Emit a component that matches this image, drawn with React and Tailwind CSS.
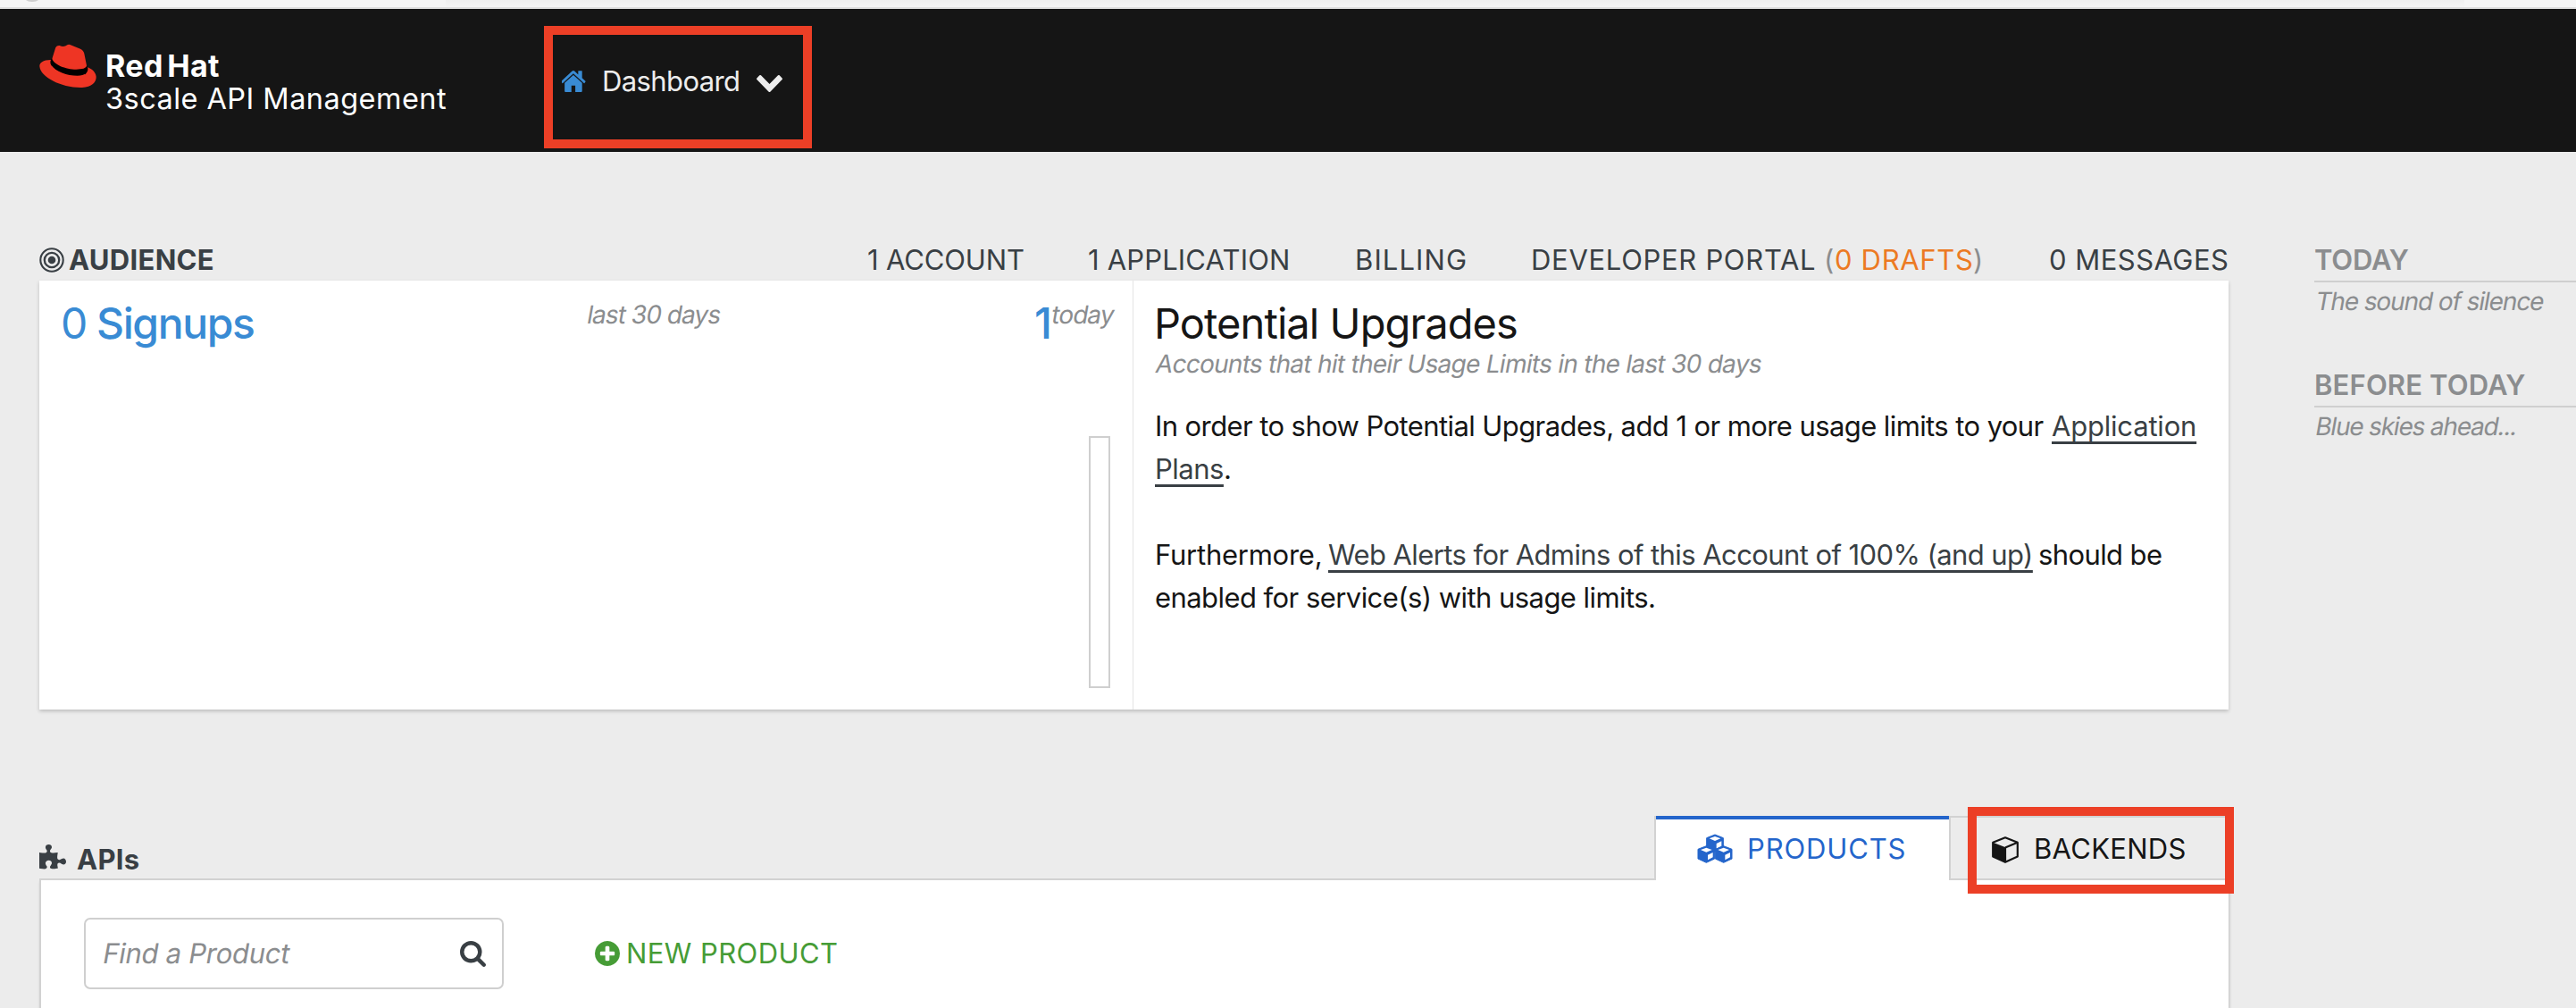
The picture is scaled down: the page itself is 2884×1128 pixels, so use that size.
import React from "react";

const GLYPHS = {
  home: {
    box: "71 248 1650 1288",
    d: "M1408 992v480q0 26-19 45t-45 19h-384v-384h-256v384h-384q-26 0-45-19t-19-45v-480q0-1 .5-3t.5-3l575-474 575 474q1 2 1 6zm223-69l-62 74q-8 9-21 11h-3q-13 0-21-7l-692-577-692 577q-12 8-24 7-13-2-21-11l-62-74q-8-10-7-23.5t11-21.5l719-599q32-26 76-26t76 26l244 204v-195q0-14 9-23t23-9h192q14 0 23 9t9 23v408l219 182q10 8 11 21.5t-7 23.5z",
  },
  chevron: {
    box: "90 533 1612 1035",
    d: "M1683 808l-742 741q-19 19-45 19t-45-19l-742-741q-19-19-19-45.5t19-45.5l166-165q19-19 45-19t45 19l531 531 531-531q19-19 45-19t45 19l166 165q19 19 19 45.5t-19 45.5z",
  },
  puzzle: {
    box: "64 0 1664 1664",
    d: "M1728 1098q0 81-44.5 135t-123.5 54q-41 0-77.5-17.5t-59-38-56.5-38-71-17.5q-110 0-110 124 0 39 16 115t15 115v5q-22 0-33 1-34 3-97.5 11.5t-115.5 13.5-98 5q-61 0-103-26.5t-42-83.5q0-37 17.5-71t38-56.5 38-59 17.5-77.5q0-79-54-123.5t-135-44.5q-84 0-143 45.5t-59 127.5q0 43 15 83t33.5 64.5 33.5 53 15 50.5q0 45-46 89-37 35-117 35-95 0-245-24-9-2-27.5-4t-27.5-4l-13-2q-1 0-3-1-2 0-2-1v-1024q2 1 17.5 3.5t34 5 21.5 3.5q150 24 245 24 80 0 117-35 46-44 46-89 0-22-15-50.5t-33.5-53-33.5-64.5-15-83q0-82 59-127.5t144-45.5q80 0 134 44.5t54 123.5q0 41-17.5 77.5t-38 59-38 56.5-17.5 71q0 57 42 83.5t103 26.5q64 0 180-15t163-17v2q-1 2-3.5 17.5t-5 34-3.5 21.5q-24 150-24 245 0 80 35 117 44 46 89 46 22 0 50.5-15t53-33.5 64.5-33.5 83-15q82 0 127.5 59t45.5 143z",
  },
  cube: {
    box: "128 0 1664 1792",
    d: "M896 1629l640-349v-636l-640 233v752zm-64-865l698-254-698-254-698 254zm832-252v768q0 35-18 65t-49 47l-704 384q-28 16-61 16t-61-16l-704-384q-31-17-49-47t-18-65v-768q0-40 23-73t61-50l704-256q22-8 44-8t44 8l704 256q38 17 61 50t23 73z",
  },
  search: {
    box: "64 128 1664 1664",
    d: "M1216 832q0-185-131.5-316.5t-316.5-131.5-316.5 131.5-131.5 316.5 131.5 316.5 316.5 131.5 316.5-131.5 131.5-316.5zm512 832q0 52-38 90t-90 38q-54 0-90-38l-343-342q-179 124-399 124-143 0-273.5-55.5t-225-150-150-225-55.5-273.5 55.5-273.5 150-225 225-150 273.5-55.5 273.5 55.5 225 150 150 225 55.5 273.5q0 220-124 399l343 343q37 37 37 90z",
  },
  plus: {
    box: "128 128 1536 1536",
    d: "M1344 960v-128q0-26-19-45t-45-19h-256v-256q0-26-19-45t-45-19h-128q-26 0-45 19t-19 45v256h-256q-26 0-45 19t-19 45v128q0 26 19 45t45 19h256v256q0 26 19 45t45 19h128q26 0 45-19t19-45v-256h256q26 0 45-19t19-45zm320-64q0 209-103 385.5t-279.5 279.5-385.5 103-385.5-103-279.5-279.5-103-385.5 103-385.5 279.5-279.5 385.5-103 385.5 103 279.5 279.5 103 385.5z",
  },
};

function Icon({ name, className }) {
  return (
    <svg viewBox={GLYPHS[name].box} preserveAspectRatio="none" fill="currentColor" className={"shrink-0 " + className}>
      <path d={GLYPHS[name].d} />
    </svg>
  );
}

// An outlined isometric box with a filled left face.
function Cube({ className }) {
  return (
    <svg viewBox="0 0 30 30" className={"shrink-0 " + className}>
      <path fill="none" stroke="currentColor" strokeWidth="2.2" strokeLinejoin="round" d="M15 1.3L28.8 6.7V22.4L15 28.8L1.2 22.4V6.7Z" />
      <path fill="none" stroke="currentColor" strokeWidth="2.2" d="M28.8 6.7L15 12.5" />
      <path fill="currentColor" d="M1.2 6.7L16.1 12.5V28.6L15 28.8L1.2 22.4Z" />
    </svg>
  );
}

function Fedora() {
  return (
    <svg viewBox="44 28 192 148" className="mt-[39px] h-[50px] w-[64px] shrink-0">
      <path fill="#ee3524" d="M86 81C58 80 44 90 45 103C48 140 120 176 188 174C220 172 236 156 235 137C233 122 222 112 205 105L200 130L84 100Z" />
      <path fill="#000" d="M88 74C80 80 80 92 84 98C98 120 138 134 172 134C198 134 209 124 207 108L202 98Z" />
      <path fill="#ee3524" d="M87 77C92 96 132 113 168 113C188 113 202 110 203 100L195 60Q193 49 182 44L147 30Q139 28 133 34Q123 39 112 33Q101 32 98 42Z" />
    </svg>
  );
}

function Bullseye() {
  return (
    <svg viewBox="0 0 28 28" className="mb-[6px] h-7 w-7 shrink-0">
      <g fill="none" stroke="currentColor">
        <circle cx="14" cy="14" r="12.7" strokeWidth="2.1" />
        <circle cx="14" cy="14" r="8.2" strokeWidth="2.3" />
      </g>
      <circle cx="14" cy="14" r="4.3" fill="currentColor" />
    </svg>
  );
}

function Cubes() {
  return (
    <svg viewBox="29 84 120 99" className="mt-[3px] h-[33px] w-[40px] shrink-0">
      {[[89, 115], [60, 153], [118, 153]].map(([x, y]) => (
        <g key={x} transform={`translate(${x} ${y})`}>
          <path fill="currentColor" stroke="currentColor" strokeWidth="3" strokeLinejoin="round" d="M0-28L28-17V15L0 28L-28 15V-17Z" />
          <path fill="#fff" d="M0-22L19-15L0-7L-19-15ZM5 2L22-6V10L5 19Z" />
        </g>
      ))}
    </svg>
  );
}

const slanted = "inline-block origin-[0_75%] -skew-x-[10deg] whitespace-nowrap text-[28px] text-[#8b8d8f]";
const link = "text-[#393f44] underline decoration-[3px] underline-offset-[6px]";

function Topbar() {
  return (
    <>
      <div className="flex h-[10px] overflow-hidden border-b-2 border-[#dedede] bg-[#f5f5f5]">
        <div className="-mt-[18px] ml-[25px] h-5 w-[22px] rounded-full bg-[#cfcfcf]" />
        <div className="ml-[452px] h-2 w-[2260px] bg-linear-to-b from-[#efefef] to-[#f5f5f5]" />
      </div>
      <header className="flex h-[160px] bg-[#151515] pl-[44px]">
        <Fedora />
        <div className="ml-[10px] w-[491px] pt-[43px] whitespace-nowrap text-white">
          <div className="text-[34px] leading-[42px] font-bold tracking-[0.37px] [word-spacing:-4px]">Red Hat</div>
          <div className="-mt-[4px] text-[32.5px] leading-[40px] tracking-[0.45px]">3scale API Management</div>
        </div>
        <button className="mt-[19px] flex h-[137px] w-[300px] border-10 border-[#ec3f26] pl-[10px] text-[#ededed]">
          <Icon name="home" className="mt-[40px] h-[24px] w-[28px] text-[#398bd4]" />
          <span className="mt-[32px] ml-[17px] w-[173px] text-left text-[31px] leading-[40px] tracking-[-0.61px]">Dashboard</span>
          <Icon name="chevron" className="mt-[45px] h-[19px] w-[29px]" />
        </button>
      </header>
    </>
  );
}

function Audience() {
  return (
    <section>
      <div className="flex h-[144px] items-end pb-[3px] leading-[40px] whitespace-nowrap text-[#393f44]">
        <Bullseye />
        <h2 className="ml-[5px] w-[894px] font-bold tracking-[0.3px]">AUDIENCE</h2>
        <nav className="grid grid-cols-[247px_299px_197px_580px_201px]">
          <a className="tracking-[-0.13px]">1 ACCOUNT</a>
          <a className="tracking-[0.17px]">1 APPLICATION</a>
          <a className="tracking-[1.1px]">BILLING</a>
          <a className="flex">
            <span className="w-[328px] tracking-[0.69px]">DEVELOPER PORTAL</span>
            <span className="w-[12px] text-[#8b8d8f]">(</span>
            <span className="w-[155px] tracking-[0.67px] text-[#ec7a23]">0 DRAFTS</span>
            <span className="text-[#8b8d8f]">)</span>
          </a>
          <a className="tracking-[0.47px]">0 MESSAGES</a>
        </nav>
      </div>
      <div className="flex h-[480px] bg-white shadow-[0_2px_4px_rgba(0,0,0,0.2)]">
        <div className="w-[1225px] border-r border-[#e4e4e4] pt-[18px] pl-[24px]">
          <div className="grid h-[60px] grid-cols-[40px_548px_502px_18px_1fr] text-[48px] leading-[60px] text-[#398bd4]">
            <span>0</span>
            <span className="font-medium tracking-[-1.38px]">Signups</span>
            <span className="text-[28px] leading-[40px]"><span className={slanted + " tracking-[-0.95px]"}>last 30 days</span></span>
            <span className="font-medium">1</span>
            <span className="text-[28px] leading-[40px]"><span className={slanted + " tracking-[-0.9px]"}>today</span></span>
          </div>
          <div className="mt-[96px] ml-[1151px] h-[282px] w-[24px] border-2 border-[#cfcfcf]" />
        </div>
        <div className="pt-[18px] pl-[24px] whitespace-nowrap text-[#151515]">
          <h3 className="-ml-[1px] text-[47px] leading-[60px] tracking-[-0.92px]">Potential Upgrades</h3>
          <div className="h-[30px] text-[28px] leading-[30px]"><span className={slanted + " tracking-[-0.72px]"}>Accounts that hit their Usage Limits in the last 30 days</span></div>
          <p className="mt-[31px] leading-[48px]">
            <span className="flex">
              <span className="w-[1004px] tracking-[-0.59px]">In order to show Potential Upgrades, add 1 or more usage limits to your</span>
              <a className={link + " tracking-[-0.2px]"}>Application</a>
            </span>
            <span className="block"><a className={link + " tracking-[-0.5px]"}>Plans</a>.</span>
          </p>
          <p className="mt-[48px] leading-[48px]">
            <span className="flex">
              <span className="w-[194px] tracking-[-0.25px]">Furthermore,</span>
              <span className="w-[795px]"><a className={link + " tracking-[-0.58px]"}>Web Alerts for Admins of this Account of 100% (and up)</a></span>
              <span className="tracking-[-0.6px]">should be</span>
            </span>
            <span className="block tracking-[-0.56px]">enabled for service(s) with usage limits.</span>
          </p>
        </div>
      </div>
    </section>
  );
}

function Apis() {
  return (
    <section className="mt-[119px]">
      <div className="flex h-[72px] leading-[40px] whitespace-nowrap">
        <div className="flex w-[1808px] items-end border-b-2 border-[#d2d2d2] pb-[1px] text-[#393f44]">
          <Icon name="puzzle" className="mb-[8px] h-[29px] w-[30px]" />
          <h2 className="ml-[12px] font-bold tracking-[0.3px]">APIs</h2>
        </div>
        <a className="flex w-[330px] border-l-2 border-[#d2d2d2] bg-white text-[#2465cb]">
          <span className="flex w-full border-t-4 border-[#2465cb] pt-[13px] pl-[46px]">
            <Cubes />
            <span className="ml-[16px] tracking-[0.85px]">PRODUCTS</span>
          </span>
        </a>
        <a className="relative flex w-[313px] border-y-2 border-l-2 border-[#d2d2d2] pt-[15px] pl-[46px] text-[#151515]">
          <Cube className="mt-[6px] h-[30px] w-[30px]" />
          <span className="ml-[17px] tracking-[0.3px]">BACKENDS</span>
          <span className="absolute -top-[12px] left-[19px] h-[97px] w-[298px] border-10 border-[#ec3f26]" />
        </a>
      </div>
      <div className="flex h-[143px] border-l-2 border-[#d2d2d2] bg-white pt-[42px] pl-[48px] shadow-[1px_2px_3px_rgba(0,0,0,0.2)]">
        <div className="flex h-[80px] w-[470px] items-center justify-between rounded-[7px] border-2 border-[#cfcfcf] pr-[18px] pl-[18px]">
          <span className="inline-block origin-[0_75%] -skew-x-[10deg] leading-[40px] tracking-[-0.28px] whitespace-nowrap text-[#8b8d8f]">Find a Product</span>
          <Icon name="search" className="h-[29px] w-[29px] text-[#393f44]" />
        </div>
        <a className="ml-[102px] flex h-[80px] items-center text-[#469c36]">
          <Icon name="plus" className="h-[28px] w-[28px]" />
          <span className="ml-[7px] leading-[40px] tracking-[0.42px]">NEW PRODUCT</span>
        </a>
      </div>
    </section>
  );
}

function Activity() {
  return (
    <aside className="ml-[96px] flex-1 leading-[40px] whitespace-nowrap text-[#8b8d8f]">
      <h2 className="flex h-[146px] items-end border-b-2 border-[#cfcfcf] pb-[3px] font-semibold tracking-[-0.2px]">TODAY</h2>
      <div className="mt-[1px] h-[40px] text-[28px]"><span className={slanted + " tracking-[-1.1px]"}>The sound of silence</span></div>
      <h2 className="mt-[54px] h-[45px] border-b-2 border-[#cfcfcf] font-semibold tracking-[0.15px]">BEFORE TODAY</h2>
      <div className="mt-[1px] h-[40px] text-[28px]"><span className={slanted + " tracking-[-1.2px]"}>Blue skies ahead...</span></div>
    </aside>
  );
}

export default function App() {
  return (
    <div className="h-[1128px] w-[2884px] overflow-hidden bg-[#ececec] font-['Inter',sans-serif] text-[31px]">
      <Topbar />
      <main className="flex pl-[44px]">
        <div className="w-[2451px] shrink-0">
          <Audience />
          <Apis />
        </div>
        <Activity />
      </main>
    </div>
  );
}
